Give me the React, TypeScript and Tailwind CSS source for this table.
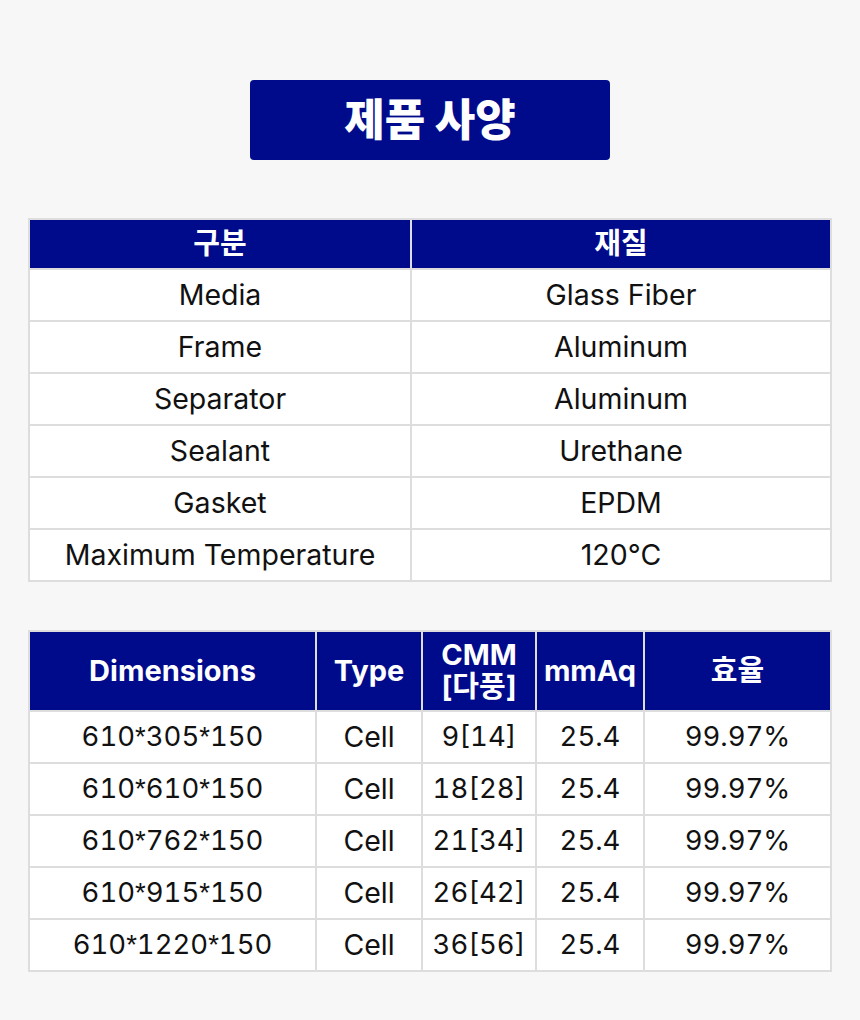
const materials = [
  ["Media", "Glass Fiber"],
  ["Frame", "Aluminum"],
  ["Separator", "Aluminum"],
  ["Sealant", "Urethane"],
  ["Gasket", "EPDM"],
  ["Maximum Temperature", "120°C"],
];

const sizes = [
  ["610*305*150", "Cell", "9[14]", "25.4", "99.97%"],
  ["610*610*150", "Cell", "18[28]", "25.4", "99.97%"],
  ["610*762*150", "Cell", "21[34]", "25.4", "99.97%"],
  ["610*915*150", "Cell", "26[42]", "25.4", "99.97%"],
  ["610*1220*150", "Cell", "36[56]", "25.4", "99.97%"],
];

const th = "border-2 border-[#dddddd] bg-[#000b8c] text-white font-bold text-[29px] leading-[32px] text-center p-0";
const td = "border-2 border-[#dddddd] bg-white text-[#111] text-[28.5px] text-center h-[52px] p-0";
const num = "border-2 border-[#dddddd] bg-white text-[#111] text-[27.5px] tabular-nums text-center h-[52px] p-0";

// Inter's asterisk sits low; the picture uses a raised one
function Dim({ text }: { text: string }) {
  const parts = text.split("*");
  return (
    <>
      {parts.map((p, i) => (
        <span key={i}>
          {i > 0 && <span style={{ fontFamily: '"Liberation Sans", sans-serif' }}>*</span>}
          {p}
        </span>
      ))}
    </>
  );
}

export default function App() {
  return (
    <main
      className="min-h-screen w-full bg-[#f7f7f7] px-[28px] pt-[80px] pb-[48px]"
      style={{ fontFamily: 'Inter, "Noto Sans CJK KR", sans-serif' }}
    >
      <div className="mx-auto flex h-[80px] w-[360px] items-center justify-center rounded-[4px] bg-[#000b8c]">
        <h1 className="text-[44px] font-extrabold text-white">제품 사양</h1>
      </div>

      {/* 재질 */}
      <table className="mt-[58px] w-full border-collapse table-fixed">
        <thead>
          <tr>
            <th className={th + " h-[50px] w-[382px]"}>구분</th>
            <th className={th + " h-[50px]"}>재질</th>
          </tr>
        </thead>
        <tbody>
          {materials.map(([k, v]) => (
            <tr key={k}>
              <td className={td}>{k}</td>
              <td className={td}>{v}</td>
            </tr>
          ))}
        </tbody>
      </table>

      {/* 규격 */}
      <table className="mt-[48px] w-full border-collapse table-fixed">
        <thead>
          <tr>
            <th className={th + " h-[80px] w-[287px]"}>Dimensions</th>
            <th className={th + " w-[106px]"}>Type</th>
            <th className={th + " w-[114px]"}>
              <div>CMM</div>
              <div>[다풍]</div>
            </th>
            <th className={th + " w-[108px]"}>mmAq</th>
            <th className={th}>효율</th>
          </tr>
        </thead>
        <tbody>
          {sizes.map((r) => (
            <tr key={r[0]}>
              <td className={num}>
                <Dim text={r[0]} />
              </td>
              <td className={td}>{r[1]}</td>
              <td className={num}>{r[2]}</td>
              <td className={num}>{r[3]}</td>
              <td className={num}>{r[4]}</td>
            </tr>
          ))}
        </tbody>
      </table>
    </main>
  );
}
